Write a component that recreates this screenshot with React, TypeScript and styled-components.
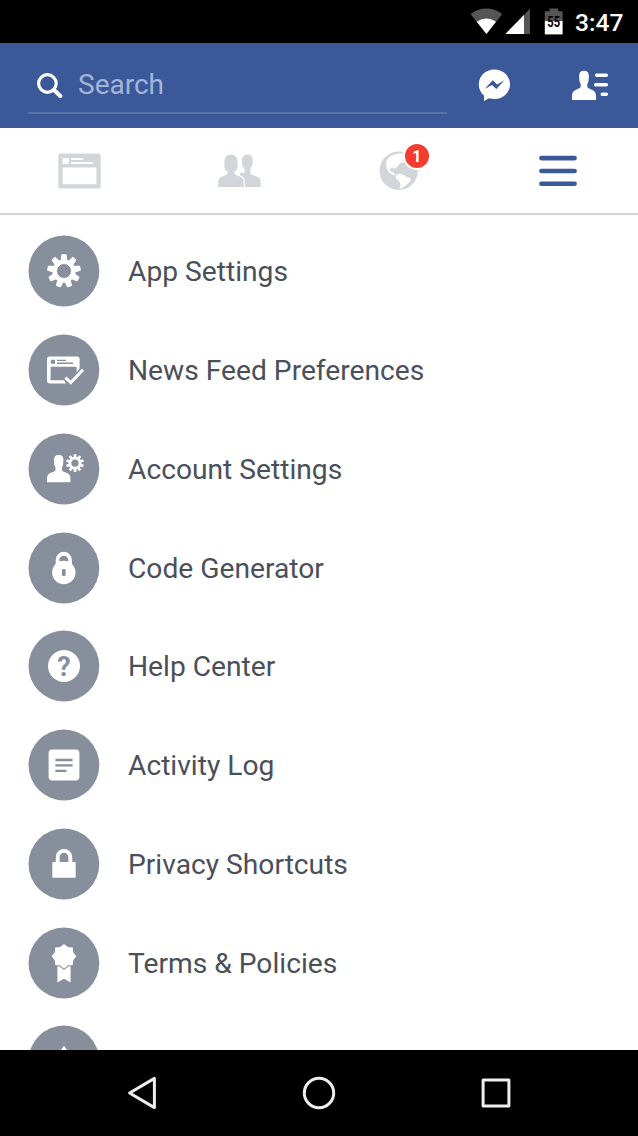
import React from 'react';
import styled, { createGlobalStyle } from 'styled-components';

const slate = '#878f9c';
const blue = '#3b5998';
const tabGray = '#d2d5d9';

const GlobalStyle = createGlobalStyle`
  * { box-sizing: border-box; }
  body {
    margin: 0;
    background: #fff;
    font-family: Roboto, "Noto Sans", sans-serif;
  }
  svg { display: block; flex: none; }
`;

const Screen = styled.div`
  display: flex;
  flex-direction: column;
  width: 638px;
  height: 1136px;
  overflow: hidden;
  background: #fff;
`;

const StatusBar = styled.div`
  display: flex;
  flex: none;
  align-items: center;
  justify-content: flex-end;
  height: 43px;
  padding-right: 14px;
  background: #000;
`;

const Clock = styled.span`
  width: 49px;
  margin-left: 11px;
  padding-top: 2px;
  color: #fff;
  font-size: 24.6px;
  font-weight: 500;
  line-height: 43px;
  white-space: nowrap;
`;

const Header = styled.header`
  display: flex;
  flex: none;
  align-items: flex-start;
  height: 85px;
  padding: 0 28px;
  background: ${blue};
`;

const SearchField = styled.div`
  display: flex;
  align-items: center;
  gap: 15px;
  width: 419px;
  height: 71px;
  padding: 15px 0 0 8px;
  border-bottom: 2px solid #5973ac;
`;

const SearchLabel = styled.span`
  color: #a3b4da;
  font-size: 28px;
  line-height: 36px;
`;

const HeaderButton = styled.div<{ $gap: number }>`
  margin: 25px 0 0 ${(p) => p.$gap}px;
`;

const Tabs = styled.nav`
  display: grid;
  flex: none;
  grid-template-columns: repeat(4, 1fr);
  height: 87px;
  border-bottom: 2px solid #d3d4d6;
`;

const Tab = styled.div`
  display: flex;
  align-items: center;
  justify-content: center;
`;

const TabIcon = styled.div`
  position: relative;
`;

const Badge = styled.span`
  position: absolute;
  top: -9px;
  left: 24px;
  width: 28px;
  height: 28px;
  border: 2px solid #fff;
  border-radius: 50%;
  background: #f33d31;
  color: #fff;
  font-size: 16px;
  font-weight: 700;
  line-height: 25px;
  text-align: center;
`;

const Menu = styled.ul`
  flex: 1;
  min-height: 0;
  margin: 0;
  padding: 7px 0 0;
  overflow: hidden;
  list-style: none;
`;

const MenuRow = styled.li`
  display: flex;
  align-items: center;
  gap: 28px;
  height: 98.75px;
  padding-left: 28px;
`;

const MenuLabel = styled.span`
  padding-top: 2px;
  color: #4b4f5a;
  font-size: 28.2px;
  line-height: 36px;
  white-space: nowrap;
`;

const NavBar = styled.footer`
  display: grid;
  flex: none;
  grid-template-columns: repeat(3, 177px);
  align-items: center;
  justify-content: center;
  justify-items: center;
  height: 86px;
  background: #000;
`;

const gearPath = (teeth: number, outer: number, body: number, hole: number, base: number, tip: number) => {
  const point = (r: number, a: number) => `${(r * Math.sin(a)).toFixed(2)} ${(-r * Math.cos(a)).toFixed(2)}`;
  const parts: string[] = [];
  for (let i = 0; i < teeth; i++) {
    const a = (i * 2 * Math.PI) / teeth;
    parts.push(point(body, a - base), point(outer, a - tip), point(outer, a + tip), point(body, a + base));
  }
  return `M${parts.join('L')}ZM${hole} 0A${hole} ${hole} 0 1 0 ${-hole} 0A${hole} ${hole} 0 1 0 ${hole} 0Z`;
};

const starPath = (points: number, outer: number, inner: number) => {
  const parts: string[] = [];
  for (let i = 0; i < points * 2; i++) {
    const r = i % 2 ? inner : outer;
    const a = (i * Math.PI) / points;
    parts.push(`${(r * Math.sin(a)).toFixed(2)} ${(-r * Math.cos(a)).toFixed(2)}`);
  }
  return `M${parts.join('L')}Z`;
};

const PERSON =
  'M0 -13.6C3.4 -13.6 4.9 -11.6 4.7 -8.2C4.6 -5 4.4 -3 3.2 -1.4V1C3.2 3 7.4 3.4 9.4 4.9C11.2 6.2 11.7 8 11.7 10.4V13.5H-11.7V10.4C-11.7 8 -11.2 6.2 -9.4 4.9C-7.4 3.4 -3.2 3 -3.2 1V-1.4C-4.4 -3 -4.6 -5 -4.7 -8.2C-4.9 -11.6 -3.4 -13.6 0 -13.6Z';

const Disc = ({ children }: { children: React.ReactNode }) => (
  <svg width="72" height="72" viewBox="-36 -36 72 72" fill="#fff">
    <circle cx="-0.1" r="35.4" fill={slate} />
    {children}
  </svg>
);

const items: { label: string; icon: React.ReactNode }[] = [
  {
    label: 'App Settings',
    icon: (
      <path
        fillRule="evenodd"
        stroke="#fff"
        strokeWidth="1"
        strokeLinejoin="round"
        d={gearPath(9, 16.4, 11.2, 7.5, 0.25, 0.13)}
      />
    ),
  },
  {
    label: 'News Feed Preferences',
    icon: (
      <>
        <path
          fillRule="evenodd"
          d="M-14.5 -13.6H13Q15.6 -13.6 15.6 -11V7L9 13.4H-14.5Q-17 13.4 -17 11V-11Q-17 -13.6 -14.5 -13.6ZM-13.4 -3.2V10.2H12.6V-3.2Z"
        />
        <path fill={slate} d="M-13.1 -10.3H-9V-6.2H-13.1ZM-7 -10.2H2V-8.9H-7ZM-7 -7.5H9V-6.1H-7Z" />
        <path fill={slate} d="M-1.6 7.4L1.4 4.6L6.6 9.4L17 -3L22 1L17 8V16H3.4Z" />
        <path d="M1.4 7.6L6.8 12.6L19 -0.2" fill="none" stroke="#fff" strokeWidth="3" />
      </>
    ),
  },
  {
    label: 'Account Settings',
    icon: (
      <>
        <path transform="translate(-5.3 -0.3)" d={PERSON} />
        <path
          transform="translate(11 -5.8)"
          fillRule="evenodd"
          d={gearPath(10, 9, 6.4, 3.6, 0.22, 0.15)}
        />
      </>
    ),
  },
  {
    label: 'Code Generator',
    icon: (
      <>
        <circle cx="-0.2" cy="4.5" r="11.7" />
        <path
          fillRule="evenodd"
          d="M-8.3 -2V-8A8.1 8.2 0 0 1 7.9 -8V-2ZM-4.7 -6.6H4.3V-8A4.5 4.2 0 0 0 -4.7 -8Z"
        />
        <rect x="-2" y="1" width="3.6" height="7" rx="1.2" fill={slate} />
      </>
    ),
  },
  {
    label: 'Help Center',
    icon: (
      <>
        <circle r="16" />
        <text y="9.6" textAnchor="middle" fontSize="27" fontWeight="700" fill={slate}>
          ?
        </text>
      </>
    ),
  },
  {
    label: 'Activity Log',
    icon: (
      <>
        <rect x="-15.4" y="-15.4" width="30.8" height="30.8" rx="3.6" />
        <path d="M-8.6 -5H8.6M-8.6 0.4H8.6M-8.6 5.9H2.4" stroke={slate} strokeWidth="2.4" />
      </>
    ),
  },
  {
    label: 'Privacy Shortcuts',
    icon: (
      <>
        <rect x="-11.7" y="-2" width="23.4" height="15.7" rx="1" />
        <path d="M-6.3 -1V-6.8A6.3 6.3 0 0 1 6.3 -6.8V-1" fill="none" stroke="#fff" strokeWidth="3.9" />
      </>
    ),
  },
  {
    label: 'Terms & Policies',
    icon: (
      <>
        <path d="M-6.6 2.6L-3.4 3.6L0 6.4L3.4 3.6L6.6 2.6V19.4L0 15.8L-6.6 19.4Z" />
        <path
          transform="translate(0 -6.7)"
          d={starPath(8, 12.4, 10)}
          stroke={slate}
          strokeWidth="2"
          paintOrder="stroke"
        />
      </>
    ),
  },
  { label: '', icon: <path d="M0 -15.2L6 -7H-6Z" /> },
];

export default function App() {
  return (
    <>
      <GlobalStyle />
      <Screen>
        <StatusBar>
          <svg width="94" height="43" viewBox="470 0 94 43">
            <path d="M486.4 34L470.6 14Q486.4 3.2 502.2 14Z" fill="#555" />
            <path d="M486.4 34L476.8 21.8Q486.4 15.4 496 21.8Z" fill="#fff" />
            <path d="M530 8.7V34H505.4Z" fill="#555" />
            <path d="M524 14.9V34H505.4Z" fill="#fff" />
            <path d="M544.8 11.2H549.5V8.4H558V11.2H562.6V22H544.8Z" fill="#555" />
            <path d="M544.8 21H562.6V34.4H544.8Z" fill="#fff" />
            <text
              x="553.7"
              y="26.8"
              textAnchor="middle"
              fontSize="14.5"
              fontWeight="700"
              textLength="12.8"
              lengthAdjust="spacingAndGlyphs"
              fill="#000"
            >
              55
            </text>
          </svg>
          <Clock>3:47</Clock>
        </StatusBar>

        <Header>
          <SearchField>
            <svg width="27" height="27" viewBox="0 0 27 27" fill="none" stroke="#fff">
              <circle cx="11.4" cy="11.5" r="8.8" strokeWidth="3.2" />
              <path d="M18 18L24.3 24" strokeWidth="4" strokeLinecap="round" />
            </svg>
            <SearchLabel>Search</SearchLabel>
          </SearchField>
          <HeaderButton $gap={31}>
            <svg width="33" height="34" viewBox="478 68 33 34">
              <path
                d="M494.4 69.4C503.3 69.4 510 75.8 510 84.2S503.3 99 494.4 99C492.3 99 490.6 98.8 489 98.2L484 101V95.6C480.8 93 478.8 89 478.8 84.2C478.8 75.8 485.5 69.4 494.4 69.4Z"
                fill="#fff"
              />
              <path d="M484.6 89L492.8 80.2L497 84.4L504.5 80.2L496.3 89L492 84.9Z" fill={blue} />
            </svg>
          </HeaderButton>
          <HeaderButton $gap={61}>
            <svg width="38" height="34" viewBox="572 68 38 34">
              <path transform="translate(584 85.5) scale(1.03 1.08)" d={PERSON} fill="#fff" />
              <path
                d="M596.7 75.2H606.3M595.7 84.8H606.3M602.3 94.2H606.3"
                stroke="#fff"
                strokeWidth="3.6"
                strokeLinecap="round"
              />
            </svg>
          </HeaderButton>
        </Header>

        <Tabs>
          <Tab>
            <svg width="43" height="36" viewBox="0 0 43 36">
              <path
                fillRule="evenodd"
                fill={tabGray}
                d="M3 0.4H40Q42.7 0.4 42.7 3V33Q42.7 35.6 40 35.6H3Q0.3 35.6 0.3 33V3Q0.3 0.4 3 0.4ZM4.6 5V11H10.8V5ZM13 5V7H25V5ZM13 9V11H35V9ZM4.6 14.6V31.2H38.4V14.6Z"
              />
            </svg>
          </Tab>
          <Tab>
            <svg width="43" height="34" viewBox="218 153 43 34" fill={tabGray}>
              <path d="M247.4 153.6C251.5 153.6 253 156.5 252.8 160.5C252.6 164 251.6 166 250.3 167.6V171.8C250.6 174.4 256 174.6 258.6 176.6C260.4 178.2 260.7 180.4 260.7 183.2V186H240V171.8H244.4V167.6C243 166 242 164 241.9 160.5C241.7 156.5 243.3 153.6 247.4 153.6Z" />
              <path
                d="M231 153.6C236 153.6 237.6 157.5 237.6 162C237.6 165 238 167.5 236.5 169.2C235.5 169.8 234.7 170 234.3 170.2V172C235 174.4 239 174.6 241.6 176.6C243.5 178.2 243.8 180.4 243.8 183.2V186H218.2V183.2C218.2 180.4 218.5 178.2 220.4 176.6C223 174.6 227 174.4 227.7 172V170.2C227.3 170 226.5 169.8 225.5 169.2C224 167.5 224.4 165 224.4 162C224.4 157.5 226 153.6 231 153.6Z"
                stroke="#fff"
                strokeWidth="2.6"
                paintOrder="stroke"
              />
            </svg>
          </Tab>
          <Tab>
            <TabIcon>
              <svg width="40" height="40" viewBox="379.3 151 40 40">
                <circle cx="399" cy="170.8" r="19.2" fill={tabGray} />
                <path
                  fill="#fff"
                  d="M387 160L390.5 156.5L396 154L402 153.2L406 155V160L403 162.5L400 163.5L398 166.5L395 168.5L392.5 167.5L390 169.5L391.5 172L394 172.5L396 175.5L393 174.8L389 172.3L386.8 168L386.3 163.5Z"
                />
                <path
                  fill="#fff"
                  d="M396.2 175L400 173.6L404 175L407.5 177.3L411.2 178.8L409.5 182.5L405.5 186L402 188.3L399.8 188.5L401 184.5L399.3 181.3L396.3 178.5Z"
                />
              </svg>
              <Badge>1</Badge>
            </TabIcon>
          </Tab>
          <Tab>
            <svg width="38" height="34" viewBox="0 0 38 34">
              <path
                d="M2.4 4.1H35.6M2.4 17H35.6M2.4 29.8H35.6"
                stroke={blue}
                strokeWidth="4.6"
                strokeLinecap="round"
              />
            </svg>
          </Tab>
        </Tabs>

        <Menu>
          {items.map((item, i) => (
            <MenuRow key={i}>
              <Disc>{item.icon}</Disc>
              <MenuLabel>{item.label}</MenuLabel>
            </MenuRow>
          ))}
        </Menu>

        <NavBar>
          <svg width="34" height="36" viewBox="-17 -18 34 36" fill="none" stroke="#eee" strokeWidth="3">
            <path d="M-12.4 0L12.4 -14.6V14.6Z" strokeLinejoin="round" />
          </svg>
          <svg width="34" height="34" viewBox="-17 -17 34 34" fill="none" stroke="#eee" strokeWidth="3">
            <circle r="14.7" />
          </svg>
          <svg width="34" height="34" viewBox="-17 -17 34 34" fill="none" stroke="#eee" strokeWidth="3">
            <rect x="-12.9" y="-12.9" width="25.8" height="25.8" strokeLinejoin="round" />
          </svg>
        </NavBar>
      </Screen>
    </>
  );
}
